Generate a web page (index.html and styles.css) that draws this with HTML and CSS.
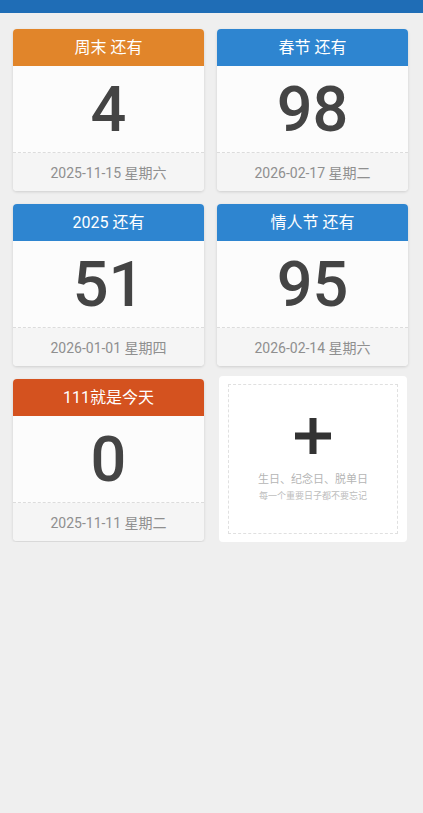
FILE: index.html
```html
<!DOCTYPE html>
<html lang="zh">
<head>
  <meta charset="UTF-8" />
  <meta name="viewport" content="width=device-width, initial-scale=1.0" />
  <title>倒数日</title>
  <link rel="stylesheet" href="styles.css">
</head>
<body>
  <!-- Top bar -->
  <div class="topbar"></div>

  <div class="grid">
    <div class="card">
      <div class="card-head orange">周末 还有</div>
      <div class="card-num">4</div>
      <div class="card-date">2025-11-15 星期六</div>
    </div>

    <div class="card">
      <div class="card-head blue">春节 还有</div>
      <div class="card-num">98</div>
      <div class="card-date">2026-02-17 星期二</div>
    </div>

    <div class="card">
      <div class="card-head blue">2025 还有</div>
      <div class="card-num">51</div>
      <div class="card-date">2026-01-01 星期四</div>
    </div>

    <div class="card">
      <div class="card-head blue">情人节 还有</div>
      <div class="card-num">95</div>
      <div class="card-date">2026-02-14 星期六</div>
    </div>

    <div class="card">
      <div class="card-head red">111就是今天</div>
      <div class="card-num">0</div>
      <div class="card-date">2025-11-11 星期二</div>
    </div>

    <div class="add-card">
      <div class="add-inner">
        <svg class="plus" width="38" height="38" viewBox="0 0 38 38">
          <rect x="15.5" y="1" width="7" height="36" fill="#333" />
          <rect x="1" y="15.5" width="36" height="7" fill="#333" />
        </svg>
        <div class="add-text">生日、纪念日、脱单日</div>
        <div class="add-sub">每一个重要日子都不要忘记</div>
      </div>
    </div>
  </div>
</body>
</html>
```

FILE: styles.css
```css
body {
  font-family: Roboto, "Noto Sans CJK SC", sans-serif;
  background-color: #efefef;
  margin: 0;
  padding: 0;
}

.topbar {
  height: 13px;
  background: #1f6db6;
}

.grid {
  display: grid;
  grid-template-columns: 191px 191px;
  column-gap: 13px;
  row-gap: 13px;
  padding: 16px 0 0 13px;
}

.card {
  background: #fcfcfc;
  border-radius: 4px;
  overflow: hidden;
  box-shadow: 0 1px 3px rgba(0, 0, 0, 0.14);
  height: 162px;
  display: flex;
  flex-direction: column;
}

.card-head {
  height: 37px;
  line-height: 37px;
  text-align: center;
  color: #fff;
  font-size: 16px;
}

.orange { background: #e1852a; }
.blue { background: #2e85d0; }
.red { background: #d4521f; }

.card-num {
  height: 86px;
  line-height: 88px;
  text-align: center;
  font-size: 63px;
  font-weight: 500;
  color: #444;
  border-bottom: 1px dashed #dcdcdc;
}

.card-date {
  flex: 1;
  background: #f5f5f5;
  color: #8f8f8f;
  font-size: 14px;
  display: flex;
  align-items: center;
  justify-content: center;
}

.add-card {
  background: #fff;
  border-radius: 4px;
  width: 188px;
  height: 166px;
  margin: -3px 0 0 2px;
  padding: 8px 9px;
  box-sizing: border-box;
}

.add-inner {
  height: 100%;
  border: 1px dashed #e0e0e0;
  display: flex;
  flex-direction: column;
  align-items: center;
  padding-top: 32px;
  box-sizing: border-box;
}

.add-text {
  margin-top: 15px;
  font-size: 11px;
  color: #b5b5b5;
}

.add-sub {
  margin-top: 3px;
  font-size: 9px;
  color: #bdbdbd;
}
```
